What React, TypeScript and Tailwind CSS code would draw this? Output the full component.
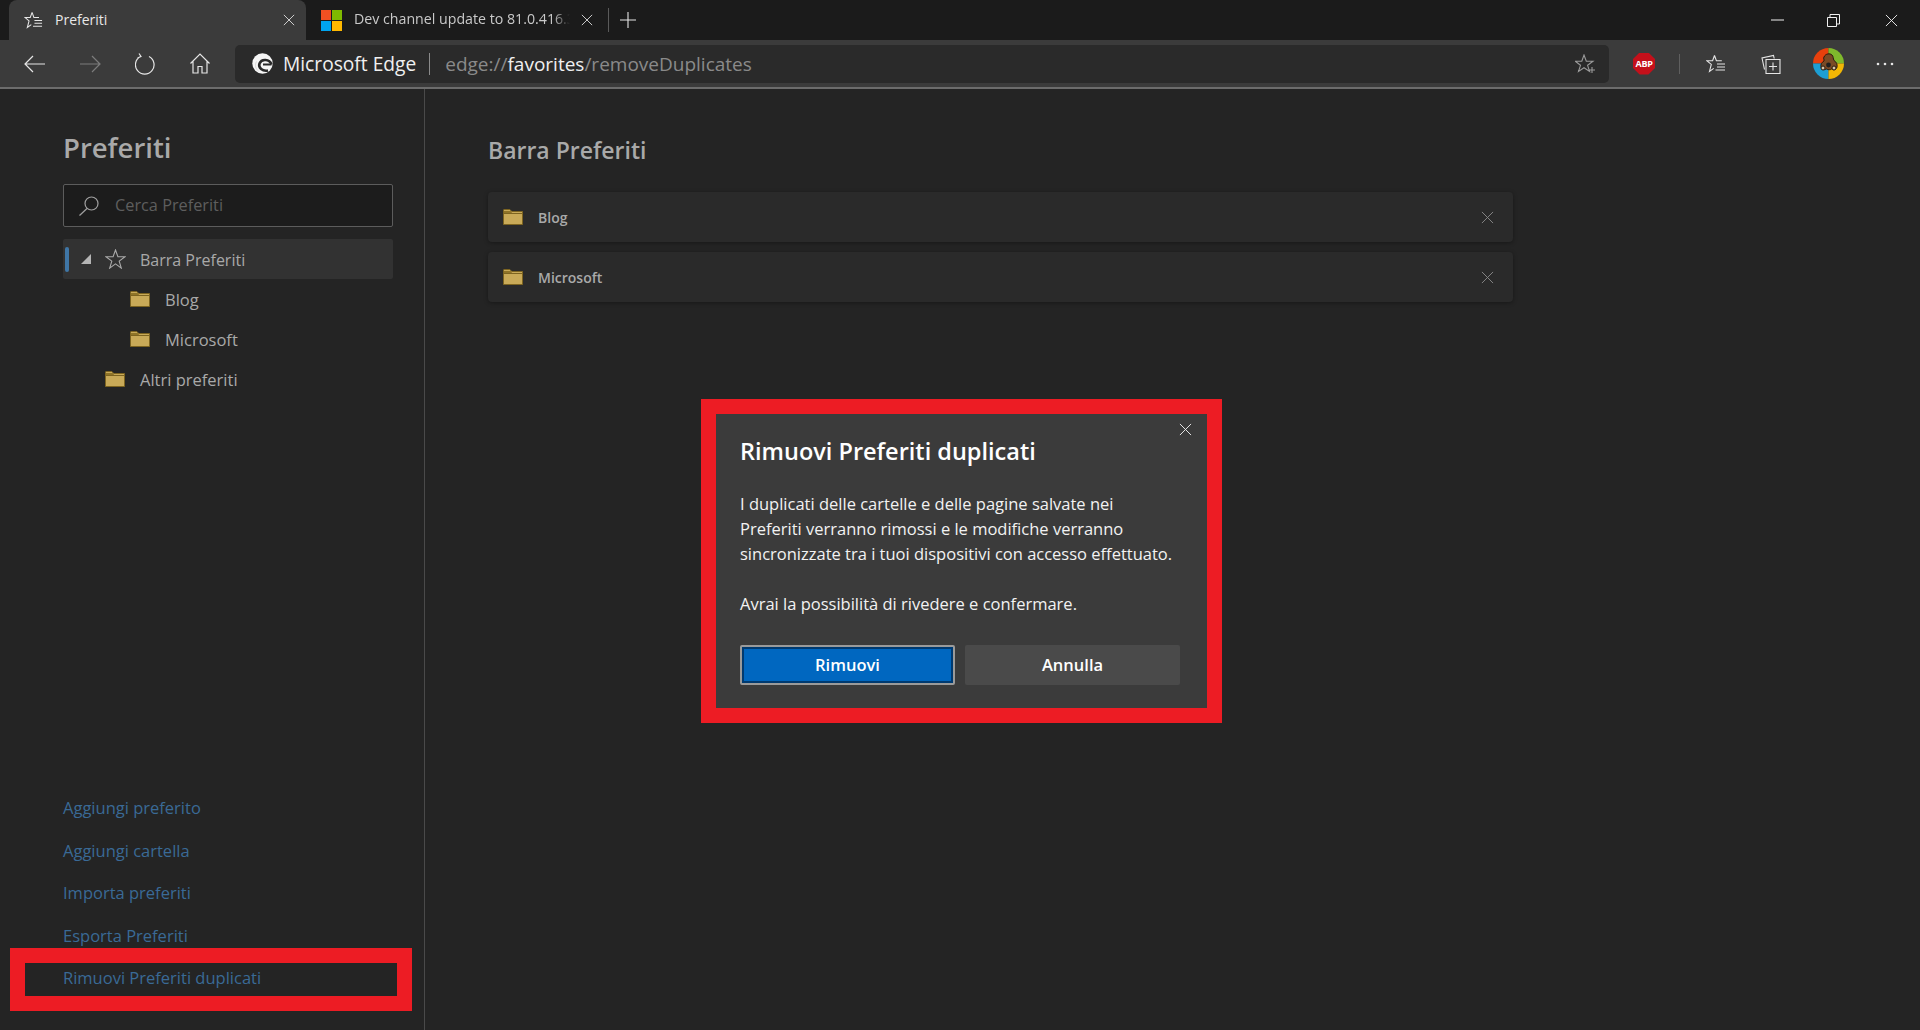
import React from "react";

const font = { fontFamily: '"Open Sans", "Noto Sans", sans-serif' };

function Folder({ className = "" }: { className?: string }) {
  return (
    <svg className={className} width="20" height="16" viewBox="0 0 20 16" fill="none">
      <path d="M0.5 15.5V1.2q0-.7.7-.7h5.6l2 2h10.7v13z" fill="#c9aa58" stroke="#7d6420" />
      <path d="M1 4.5h18" stroke="#7d6420" strokeWidth="1" />
      <path d="M1 2h6.6l1.6 2H1z" fill="#8f7428" />
    </svg>
  );
}

function Cross({ size = 14, color = "#fff", width = 1 }: { size?: number; color?: string; width?: number }) {
  return (
    <svg width={size} height={size} viewBox="0 0 14 14" fill="none" stroke={color} strokeWidth={width}>
      <path d="M1 1l12 12M13 1L1 13" />
    </svg>
  );
}

function StarList({ color = "#e6e6e6", size = 20 }: { color?: string; size?: number }) {
  return (
    <svg width={size} height={size} viewBox="0 0 20 20" fill="none" stroke={color} strokeWidth="1.1">
      <path d="M8.5 1.5l1.9 5.3h5.4M8.5 1.5L6.6 6.8H1l4.3 3.6-1.8 7 4.2-3" />
      <path d="M11 10h8M11 13h8M9.5 16h9.5" />
    </svg>
  );
}

function EdgeLogo() {
  return (
    <svg width="21" height="21" viewBox="0 0 21 21" fill="none">
      <circle cx="10.5" cy="10.5" r="10.2" fill="#f6f6f6" />
      <path d="M19.5 11.5C17.500 6 9.500 5.500 7.500 10.500C6 15 10.500 18.500 16 17.500" stroke="#2a2a2a" strokeWidth="2.600" />
      <path d="M11 11.500h8.500" stroke="#2a2a2a" strokeWidth="2" />
      <path d="M4.500 8.500C2.500 12 3.500 16 6.500 18" stroke="#d8d8d8" strokeWidth="1" />
    </svg>
  );
}

function MsLogo() {
  return (
    <svg width="21" height="21" viewBox="0 0 21 21">
      <rect x="0" y="0" width="10" height="10" fill="#f25022" />
      <rect x="11" y="0" width="10" height="10" fill="#7fba00" />
      <rect x="0" y="11" width="10" height="10" fill="#00a4ef" />
      <rect x="11" y="11" width="10" height="10" fill="#ffb900" />
    </svg>
  );
}

function Avatar() {
  return (
    <svg width="31" height="31" viewBox="0 0 31 31">
      <path d="M15.500 15.500V0A15.500 15.500 0 0 0 0 15.500z" fill="#e8400c" />
      <path d="M15.500 15.500V0A15.500 15.500 0 0 1 31 15.500z" fill="#7fb92c" />
      <path d="M15.500 15.500H0A15.500 15.500 0 0 0 15.500 31z" fill="#1d9fd4" />
      <path d="M15.500 15.500H31A15.500 15.500 0 0 1 15.500 31z" fill="#f2b705" />
      <path d="M11 9c1.500-3.500 6-4 8-2 1.500 1.500 1 3.500 2 5.500 2.500 1.500 3.500 4 3 6.500-.5 2.500-3.500 3.500-5.500 2-1 1-3.500 1-5 0-2.500 1.500-5 .5-5.500-2-.5-2.500.5-4.500 3-6 .5-1.500-1-2.500 0-4z" fill="#7a4a25" stroke="#2a1a0e" strokeWidth="1" />
      <circle cx="15.500" cy="17" r="2.400" fill="#1f1f1f" />
      <circle cx="10" cy="20" r="2" fill="#d9c6a8" stroke="#2a1a0e" />
      <circle cx="21" cy="20" r="2" fill="#d9c6a8" stroke="#2a1a0e" />
    </svg>
  );
}

function Tab({ active, children }: { active?: boolean; children: React.ReactNode }) {
  return <div className={active ? "flex h-10 shrink-0 items-center rounded-t-lg bg-[#3b3b3b]" : "flex h-10 shrink-0 items-center"}>{children}</div>;
}

function SideLink({ children }: { children: React.ReactNode }) {
  return <div className="flex h-[42.6px] items-center text-[16.5px] text-[#3a6a96]">{children}</div>;
}

function FavCard({ name }: { name: string }) {
  return (
    <div className="flex h-[50px] items-center rounded-[4px] bg-[#2a2a2a] pl-[15px] pr-[19px] shadow-[0_1px_4px_rgba(0,0,0,0.35)]">
      <Folder />
      <span className="ml-[15px] text-[14px] font-semibold text-[#a9a9a9]">{name}</span>
      <span className="ml-auto flex">
        <Cross size={13} color="#8a8a8a" />
      </span>
    </div>
  );
}

export default function App() {
  return (
    <div style={font} className="relative flex h-[1030px] w-[1920px] flex-col overflow-hidden bg-[#242424]">
      {/* Tab strip */}
      <div className="flex h-10 shrink-0 items-center bg-[#1b1b1b] pl-[9px]">
        <Tab active>
          <div className="flex w-[297px] items-center pl-[15px]">
            <StarList size={19} />
            <span className="ml-[12px] pb-[2px] text-[14px] text-[#e8e8e8]">Preferiti</span>
            <span className="ml-auto mr-[11px] flex">
              <Cross size={12} color="#e6e6e6" />
            </span>
          </div>
        </Tab>
        <Tab>
          <div className="flex items-center pl-[15px]">
            <MsLogo />
            <span className="ml-[12px] w-[216px] overflow-hidden whitespace-nowrap pb-[2px] text-[14.2px] text-[#c9c9c9] [mask-image:linear-gradient(to_right,black_92%,transparent)]">Dev channel update to 81.0.416.3</span>
            <span className="ml-[11px] flex">
              <Cross size={12} color="#e6e6e6" />
            </span>
            <span className="ml-[15px] h-[24px] w-px bg-[#5a5a5a]" />
            <span className="ml-[11px] flex">
              <svg width="16" height="16" viewBox="0 0 16 16" stroke="#e6e6e6" strokeWidth="1.1"><path d="M8 0v16M0 8h16" /></svg>
            </span>
          </div>
        </Tab>
        <div className="ml-auto flex items-center">
          <svg className="mr-[43px]" width="13" height="2" viewBox="0 0 13 2" stroke="#f0f0f0"><path d="M0 1h13" /></svg>
          <svg className="mr-[45px]" width="13" height="13" viewBox="0 0 13 13" fill="none" stroke="#f0f0f0"><path d="M.5 3.500h9v9h-9zM3 3.500V.5h9.500v9.500h-3" /></svg>
          <span className="mr-[22px] flex"><Cross size={13} color="#f0f0f0" /></span>
        </div>
      </div>

      {/* Toolbar */}
      <div className="flex h-[47px] shrink-0 items-center bg-[#3b3b3b]">
        <div className="flex items-center pl-[24px]">
          <svg width="21" height="18" viewBox="0 0 21 18" fill="none" stroke="#e6e6e6" strokeWidth="1.2"><path d="M21 9H1M9 1L1 9l8 8" /></svg>
          <svg className="ml-[35px]" width="21" height="18" viewBox="0 0 21 18" fill="none" stroke="#7c7c7c" strokeWidth="1.2"><path d="M0 9h20M12 1l8 8-8 8" /></svg>
          <svg className="ml-[34px]" width="20" height="22" viewBox="0 0 20 22" fill="none" stroke="#e6e6e6" strokeWidth="1.200"><path d="M14 3.500A9.300 9.300 0 1 1 5.500 3.500M4 .5l2 3-3.500 1.500" /></svg>
          <svg className="ml-[35px]" width="20" height="21" viewBox="0 0 20 21" fill="none" stroke="#e6e6e6" strokeWidth="1.200"><path d="M.5 10.500L10 1l9.500 9.500M3 8.500V20h5v-6.500h4V20h5V8.500" /></svg>
        </div>
        <div className="ml-[25px] flex h-[38px] w-[1374px] items-center rounded-[5px] bg-[#2a2a2a] pl-[17px] pr-[13px]">
          <EdgeLogo />
          <span className="ml-[10px] pt-[1px] text-[19.200px] text-[#f0f0f0]">Microsoft Edge</span>
          <span className="ml-[13px] h-[22px] w-px bg-[#8a8a8a]" />
          <span className="ml-[15px] pt-[1px] text-[19px] text-[#8a8a8a]">
            edge://<span className="text-[#f0f0f0]">favorites</span>/removeDuplicates
          </span>
          <svg className="ml-auto" width="21" height="20" viewBox="0 0 21 20" fill="none" stroke="#9a9a9a" strokeWidth="1.100">
            <path d="M9 1l2.300 6.300H18l-5.400 4 2 6.200L9 13.700 3.500 17.500l2-6.200-5.200-4H6.800z" />
            <path d="M17 13v6M14 16h6" />
          </svg>
        </div>
        <div className="relative ml-[24px] flex h-[22px] w-[22px] items-center justify-center bg-[#c4101a] [clip-path:polygon(30%_0,70%_0,100%_30%,100%_70%,70%_100%,30%_100%,0_70%,0_30%)]">
          <span className="text-[9px] font-bold leading-none tracking-[-0.3px] text-white">ABP</span>
        </div>
        <span className="ml-[24px] h-[20px] w-px bg-[#5f5f5f]" />
        <span className="ml-[26px] flex"><StarList color="#e6e6e6" size={20} /></span>
        <svg className="ml-[35px]" width="20" height="20" viewBox="0 0 20 20" fill="none" stroke="#e6e6e6" strokeWidth="1.100">
          <path d="M3.500 15.500L1 4l11.500-2.500.7 3" />
          <path d="M5 5.500h14v14H5zM12 8.500v8M8 12.500h8" />
        </svg>
        <span className="ml-[32px] flex"><Avatar /></span>
        <svg className="ml-[32px]" width="18" height="4" viewBox="0 0 18 4" fill="#e6e6e6">
          <circle cx="2" cy="2" r="1.300" /><circle cx="9" cy="2" r="1.300" /><circle cx="16" cy="2" r="1.300" />
        </svg>
      </div>
      <div className="h-[2px] shrink-0 bg-[#6c6c6c]" />

      {/* Body */}
      <div className="flex min-h-0 flex-1">
        <aside className="flex w-[425px] shrink-0 flex-col border-r border-[#4a4a4a] pb-[30px] pl-[63px] pr-[31px]">
          <h1 className="mt-[39px] text-[27.500px] font-semibold leading-[40px] text-[#a9a9a9]">Preferiti</h1>
          <div className="mt-[16px] flex h-[43px] items-center rounded-[2px] border border-[#5c5c5c] bg-[#1c1c1c] pl-[15px]">
            <svg width="20" height="20" viewBox="0 0 20 20" fill="none" stroke="#a0a0a0" strokeWidth="1.200"><circle cx="12.500" cy="7.500" r="6.500" /><path d="M8 12.500L.5 19.500" /></svg>
            <span className="ml-[16px] text-[16.300px] text-[#5e5e5e]">Cerca Preferiti</span>
          </div>
          <div className="mt-[12px] flex h-[40px] items-center rounded-[2px] bg-[#323232] pl-[2px]">
            <span className="h-[25px] w-[4px] rounded-[2px] bg-[#3f76a6]" />
            <span className="ml-[12px] h-0 w-0 border-b-[10px] border-l-[10px] border-b-[#b5b5b5] border-l-transparent" />
            <svg className="ml-[14px]" width="21" height="20" viewBox="0 0 21 20" fill="none" stroke="#aaa" strokeWidth="1.100"><path d="M10.500 1l2.400 6.700H20l-5.800 4.400 2.100 7-5.800-4.200-5.800 4.200 2.100-7L1 7.700h7.100z" /></svg>
            <span className="ml-[14px] pt-[1px] text-[16px] text-[#a9a9a9]">Barra Preferiti</span>
          </div>
          <div className="flex h-[40px] items-center pl-[67px]"><Folder /><span className="ml-[15px] pt-[3px] text-[16.500px] text-[#a9a9a9]">Blog</span></div>
          <div className="flex h-[40px] items-center pl-[67px]"><Folder /><span className="ml-[15px] pt-[3px] text-[16.500px] text-[#a9a9a9]">Microsoft</span></div>
          <div className="flex h-[40px] items-center pl-[42px]"><Folder /><span className="ml-[15px] pt-[3px] text-[16.500px] text-[#a9a9a9]">Altri preferiti</span></div>
          <div className="mt-auto">
            <SideLink>Aggiungi preferito</SideLink>
            <SideLink>Aggiungi cartella</SideLink>
            <SideLink>Importa preferiti</SideLink>
            <SideLink>Esporta Preferiti</SideLink>
            <SideLink>Rimuovi Preferiti duplicati</SideLink>
          </div>
        </aside>
        <main className="flex-1 pl-[63px] pt-[41px]">
          <h2 className="text-[23px] font-semibold leading-[40px] text-[#a9a9a9]">Barra Preferiti</h2>
          <div className="mt-[22px] flex w-[1025px] flex-col gap-[10px]">
            <FavCard name="Blog" />
            <FavCard name="Microsoft" />
          </div>
        </main>
      </div>

      {/* Annotation around the sidebar link */}
      <div className="absolute left-[10px] top-[948px] h-[63px] w-[402px] border-[15px] border-[#ed1c24]" />

      {/* Dialog with its annotation frame */}
      <div className="absolute left-[701px] top-[399px] w-[521px] border-[15px] border-[#ed1c24]">
        <div className="relative h-[294px] bg-[#3b3b3b] px-[24px] pt-[21px] text-white">
          <span className="absolute right-[15px] top-[9px] flex"><Cross size={13} color="#f0f0f0" /></span>
          <h3 className="text-[23.500px] font-semibold leading-[32px]">Rimuovi Preferiti duplicati</h3>
          <div className="mt-[24px] whitespace-nowrap text-[16.500px] leading-[25px] text-[#f2f2f2]">
            <p>I duplicati delle cartelle e delle pagine salvate nei</p>
            <p>Preferiti verranno rimossi e le modifiche verranno</p>
            <p>sincronizzate tra i tuoi dispositivi con accesso effettuato.</p>
            <p className="mt-[25px]">Avrai la possibilità di rivedere e confermare.</p>
          </div>
          <div className="mt-[29px] flex gap-[10px]">
            <button className="h-[40px] w-[215px] rounded-[2px] border-[2px] border-[#9a9a9a] bg-[#0067c0] text-[16.500px] font-semibold text-white shadow-[inset_0_0_0_2px_#003a70]">Rimuovi</button>
            <button className="h-[40px] w-[215px] rounded-[2px] bg-[#4a4a4a] text-[16.500px] font-semibold text-white">Annulla</button>
          </div>
        </div>
      </div>
    </div>
  );
}
